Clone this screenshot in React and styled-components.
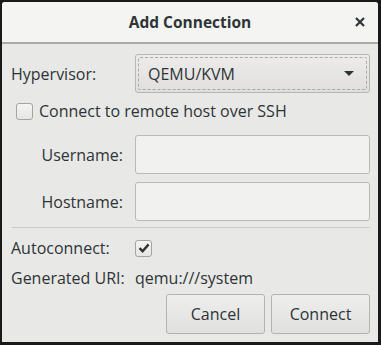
import React, { useState } from 'react';
import styled, { createGlobalStyle } from 'styled-components';

const Global = createGlobalStyle`
  html, body {
    margin: 0;
    padding: 0;
    background: #000;
  }
  body {
    font-family: "Open Sans", "Noto Sans", sans-serif;
    color: #2e3436;
  }
`;

const Frame = styled.div`
  width: 381px;
  height: 345px;
  box-sizing: border-box;
  background: #1a1a1a;
  padding: 2px 3px 3px 2px;
`;

const Window = styled.div`
  height: 100%;
  display: flex;
  flex-direction: column;
  background: #e8e8e7;
  border-radius: 3px 3px 0 0;
  overflow: hidden;
`;

const Header = styled.div`
  height: 40px;
  display: flex;
  align-items: center;
  justify-content: center;
  position: relative;
  background: #f4f4f3;
  border-bottom: 2px solid #a9a9a7;
`;

const Title = styled.div`
  font-size: 15.5px;
  font-weight: 700;
  color: #2e3436;
`;

const Close = styled.button`
  position: absolute;
  right: 8px;
  top: 10px;
  width: 20px;
  height: 20px;
  border: none;
  background: none;
  padding: 0;
  display: flex;
  align-items: center;
  justify-content: center;
`;

const Body = styled.div`
  flex: 1;
  padding: 10px 8px 8px 9px;
  display: flex;
  flex-direction: column;
`;

const Row = styled.div`
  display: grid;
  grid-template-columns: 124px 1fr;
  align-items: center;
  height: ${(p) => p.h || 39}px;
  margin-bottom: ${(p) => p.mb || 0}px;
`;

const Label = styled.span`
  font-size: 16px;
  color: #2e3436;
  white-space: nowrap;
  text-align: ${(p) => (p.right ? 'right' : 'left')};
  padding-right: ${(p) => (p.right ? 12 : 0)}px;
`;

const Combo = styled.div`
  height: 39px;
  box-sizing: border-box;
  border: 1px solid #b6b6b3;
  border-radius: 3px;
  background: linear-gradient(#edeceb, #e0dfdd);
  padding: 2px;
  display: flex;
`;

const ComboInner = styled.div`
  flex: 1;
  border: 1px dashed #a9a9a6;
  border-radius: 2px;
  display: flex;
  align-items: center;
  justify-content: space-between;
  padding: 0 12px 0 9px;
  font-size: 16px;
  color: #2e3436;
`;

const Arrow = styled.div`
  width: 0;
  height: 0;
  border-left: 5px solid transparent;
  border-right: 5px solid transparent;
  border-top: 5px solid #2e3436;
`;

const CheckLine = styled.label`
  display: flex;
  align-items: center;
  gap: 6px;
  height: 24px;
  margin: 6px 0 12px 5px;
  font-size: 16px;
`;

const Box = styled.span`
  width: 17px;
  height: 17px;
  box-sizing: border-box;
  border: 1px solid #a4a4a1;
  border-radius: 3px;
  background: linear-gradient(#f4f4f3, #e6e6e4);
  display: inline-flex;
  align-items: center;
  justify-content: center;
`;

const Entry = styled.input`
  height: 39px;
  box-sizing: border-box;
  border: 1px solid #b9b9b6;
  border-radius: 3px;
  background: #f1f1f0;
  outline: none;
  font-family: inherit;
  font-size: 16px;
  padding: 0 8px;
`;

const Separator = styled.div`
  height: 1px;
  background: #c9c9c7;
  margin: 6px 0 9px 1px;
`;

const Buttons = styled.div`
  display: flex;
  justify-content: flex-end;
  gap: 6px;
  margin-top: auto;
`;

const Button = styled.button`
  width: 99px;
  height: 40px;
  box-sizing: border-box;
  border: 1px solid #b3b3b0;
  border-radius: 3px;
  background: linear-gradient(#eeeeed, #e0e0de);
  font-family: inherit;
  font-size: 16px;
  color: #2e3436;
`;

function Check({ checked }) {
  return (
    <Box>
      {checked && (
        <svg width="12" height="12" viewBox="0 0 12 12">
          <path d="M1.5 6.2 L4.6 9.2 L10.6 2.4" fill="none" stroke="#2e3436" strokeWidth="2.4" />
        </svg>
      )}
    </Box>
  );
}

export default function App() {
  const [auto] = useState(true);
  return (
    <Frame>
      <Global />
      <Window>
        <Header>
          <Title>Add Connection</Title>
          <Close>
            <svg width="12" height="12" viewBox="0 0 12 12">
              <path d="M2 2 L10 10 M10 2 L2 10" stroke="#2e3436" strokeWidth="2.2" />
            </svg>
          </Close>
        </Header>
        <Body>
          <Row>
            <Label>Hypervisor:</Label>
            <Combo>
              <ComboInner>
                QEMU/KVM
                <Arrow />
              </ComboInner>
            </Combo>
          </Row>
          <CheckLine>
            <Check />
            Connect to remote host over SSH
          </CheckLine>
          <Row mb={8}>
            <Label right>Username:</Label>
            <Entry />
          </Row>
          <Row>
            <Label right>Hostname:</Label>
            <Entry />
          </Row>
          <Separator />
          <Row h={22} mb={8}>
            <Label>Autoconnect:</Label>
            <Check checked={auto} />
          </Row>
          <Row h={22}>
            <Label>Generated URI:</Label>
            <Label>qemu:///system</Label>
          </Row>
          <Buttons>
            <Button>Cancel</Button>
            <Button>Connect</Button>
          </Buttons>
        </Body>
      </Window>
    </Frame>
  );
}
